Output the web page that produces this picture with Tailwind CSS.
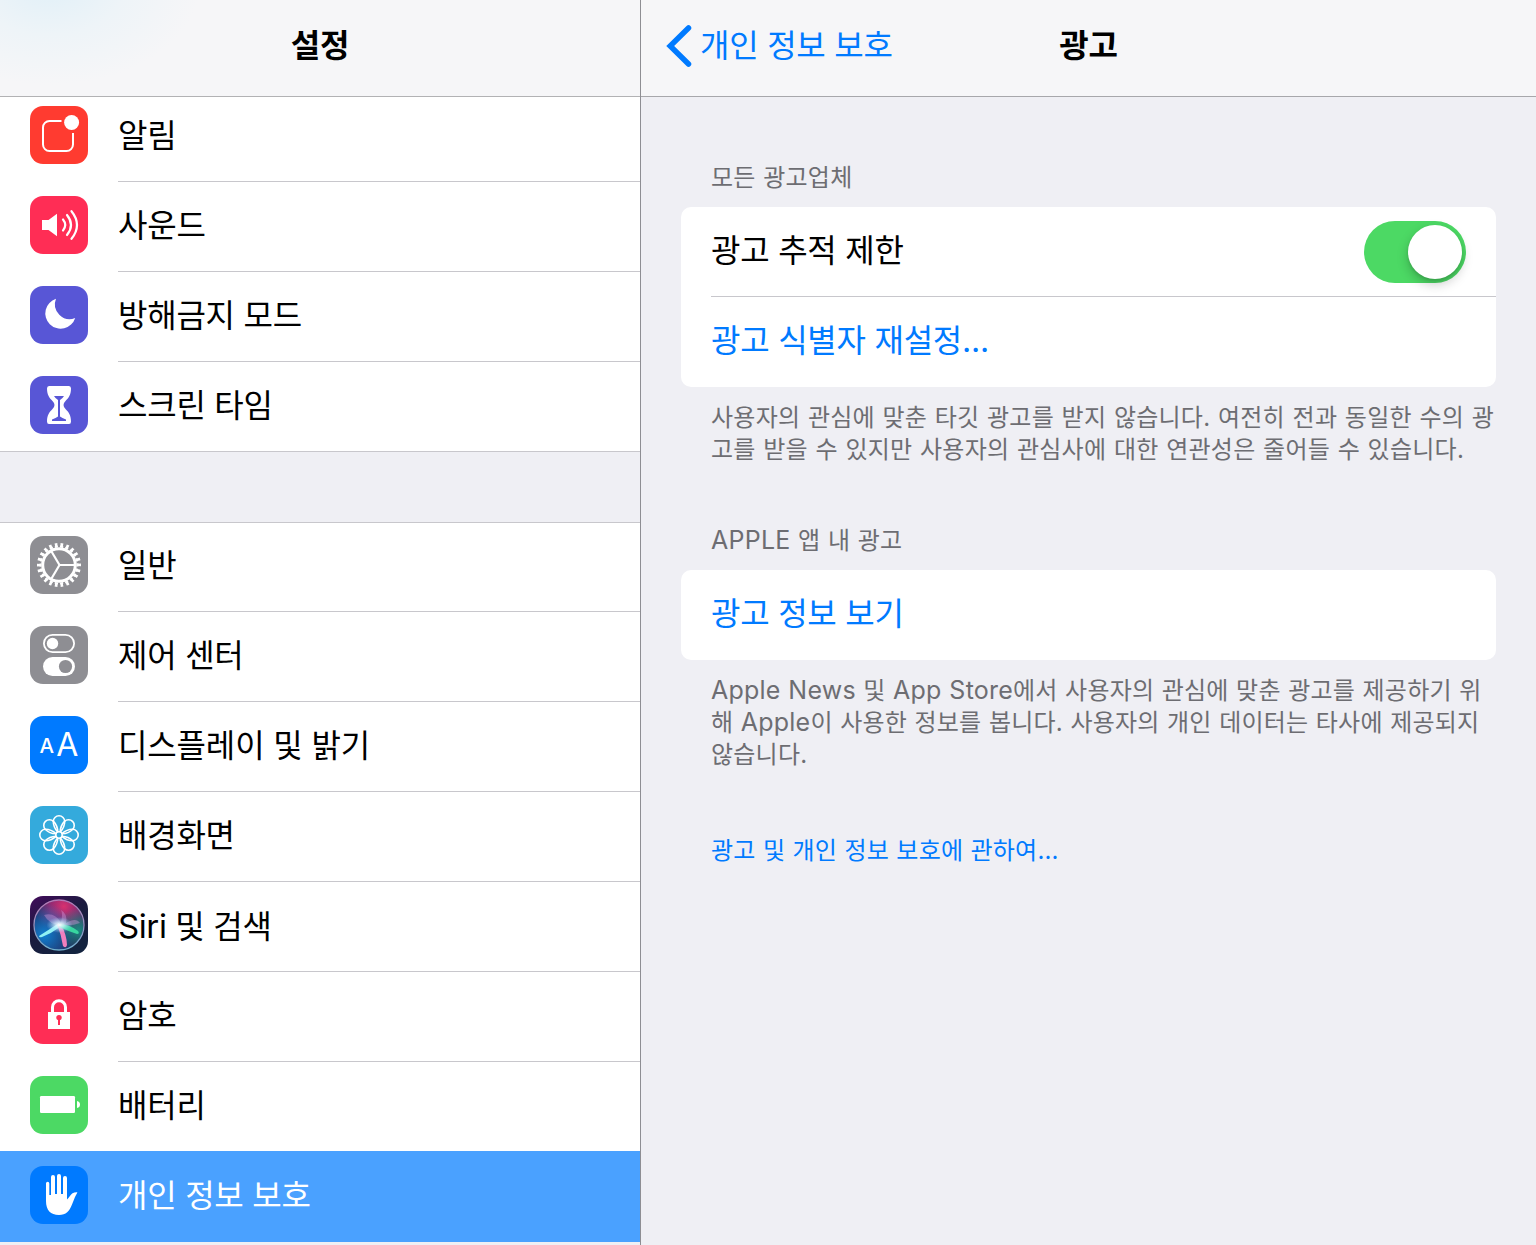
<!DOCTYPE html>
<html lang="ko">
<head>
<meta charset="utf-8">
<title>설정</title>
<script src="https://cdn.jsdelivr.net/npm/@tailwindcss/browser@4"></script>
</head>
<body class="w-[1536px] h-[1245px] overflow-hidden bg-[#efeff4] text-black text-[32px] leading-none tracking-[-0.25px] font-['Inter','Noto_Sans_CJK_KR',sans-serif]">
<div class="flex h-[1245px]">

  <!-- Sidebar -->
  <aside class="w-[641px] shrink-0 h-full border-r border-[#8e8e93] flex flex-col overflow-hidden">
    <header class="relative z-10 h-[97px] shrink-0 border-b border-[#b2b2b4] bg-[#f6f6f8] bg-[radial-gradient(ellipse_150px_100px_at_50px_-15px,#e1f0f8,#eef4f8_50%,transparent)] flex justify-center pt-[30px]">
      <h1 class="font-bold">설정</h1>
    </header>

    <ul class="bg-white -mt-[5px] border-b border-[#c8c7cc]">
      <li class="h-[90px] flex pl-[30px] gap-[30px]">
        <svg class="size-[58px] mt-[14px] shrink-0" viewBox="0 0 58 58"><rect width="58" height="58" rx="13" fill="#ff3b30"/><path d="M31.500 15H19.500a6.500 6.500 0 0 0-6.500 6.500V38.500a6.500 6.500 0 0 0 6.500 6.500H36.500a6.500 6.500 0 0 0 6.500-6.500V27" fill="none" stroke="#fff" stroke-width="2"/><circle cx="41.600" cy="16.500" r="7.500" fill="#fff"/></svg>
        <span class="flex-1 border-b border-[#c8c7cc] pt-[28px]">알림</span>
      </li>
      <li class="h-[90px] flex pl-[30px] gap-[30px]">
        <svg class="size-[58px] mt-[14px] shrink-0" viewBox="0 0 58 58"><rect width="58" height="58" rx="13" fill="#ff2d55"/><path d="M12 24h6.500L27 17.800V40.200L18.500 34H12z" fill="#fff"/><g fill="none" stroke="#fff" stroke-width="2.200" stroke-linecap="round"><path d="M33 23.500q4.500 5.500 0 11"/><path d="M37 19q8 10 0 20"/><path d="M41.500 15.200q11 13.800 0 27.600"/></g></svg>
        <span class="flex-1 border-b border-[#c8c7cc] pt-[28px]">사운드</span>
      </li>
      <li class="h-[90px] flex pl-[30px] gap-[30px]">
        <svg class="size-[58px] mt-[14px] shrink-0" viewBox="0 0 58 58"><rect width="58" height="58" rx="13" fill="#5856d6"/><path d="M26 12.800A15.300 15.300 0 1 0 45.200 32 14.800 14.800 0 0 1 26 12.800z" fill="#fff"/></svg>
        <span class="flex-1 border-b border-[#c8c7cc] pt-[28px]">방해금지 모드</span>
      </li>
      <li class="h-[89px] flex pl-[30px] gap-[30px]">
        <svg class="size-[58px] mt-[14px] shrink-0" viewBox="0 0 58 58"><rect width="58" height="58" rx="13" fill="#5856d6"/><path d="M19 10H39Q41 10 41 12.500C41 19 38.500 22 35.500 25Q31.500 29 35.500 33C38.500 36 41 39 41 45.500Q41 48 39 48H19Q17 48 17 45.500C17 39 19.500 36 22.500 33Q26.500 29 22.500 25C19.500 22 17 19 17 12.500Q17 10 19 10z" fill="#fff"/><path d="M24 20H34Q33 22 30 24V40.500Q32 42 36 43.500V45H22V43.500Q26 42 28 40.500V24Q25 22 24 20z" fill="#5856d6"/></svg>
        <span class="flex-1 pt-[28px]">스크린 타임</span>
      </li>
    </ul>

    <ul class="bg-white mt-[70px] border-t border-[#c8c7cc]">
      <li class="h-[89px] flex pl-[30px] gap-[30px]">
        <svg class="size-[58px] mt-[13px] shrink-0" viewBox="0 0 58 58"><rect width="58" height="58" rx="13" fill="#8e8e93"/><g fill="none" stroke="#fff"><circle cx="29" cy="29" r="18.500" stroke-width="2" pathLength="220" stroke-dasharray="6 4" transform="rotate(-4.900 29 29)"/><circle cx="29" cy="29" r="20" stroke-width="4" pathLength="220" stroke-dasharray="4.600 5.400" transform="rotate(-3.800 29 29)"/><circle cx="29" cy="29" r="16.300" stroke-width="3"/><path d="M29.500 29H45M29.500 29L21.500 15.500M29.500 29L21.500 42.500" stroke-width="2.200"/></g></svg>
        <span class="flex-1 border-b border-[#c8c7cc] pt-[27px]">일반</span>
      </li>
      <li class="h-[90px] flex pl-[30px] gap-[30px]">
        <svg class="size-[58px] mt-[14px] shrink-0" viewBox="0 0 58 58"><rect width="58" height="58" rx="13" fill="#8e8e93"/><rect x="13.900" y="8.900" width="30.200" height="17.200" rx="8.600" fill="none" stroke="#fff" stroke-width="1.800"/><circle cx="22.500" cy="17.500" r="5.700" fill="#fff"/><rect x="13" y="31" width="32" height="19" rx="9.500" fill="#fff"/><circle cx="35.500" cy="40.500" r="6.600" fill="#8e8e93"/></svg>
        <span class="flex-1 border-b border-[#c8c7cc] pt-[28px]">제어 센터</span>
      </li>
      <li class="h-[90px] flex pl-[30px] gap-[30px]">
        <svg class="size-[58px] mt-[14px] shrink-0" viewBox="0 0 58 58"><rect width="58" height="58" rx="13" fill="#007aff"/><g fill="#fff" letter-spacing="0"><text x="9.600" y="36.800" font-size="20.500" font-weight="500">A</text><text x="26.200" y="39.700" font-size="32">A</text></g></svg>
        <span class="flex-1 border-b border-[#c8c7cc] pt-[28px] tracking-[-0.15px]">디스플레이 및 밝기</span>
      </li>
      <li class="h-[90px] flex pl-[30px] gap-[30px]">
        <svg class="size-[58px] mt-[14px] shrink-0" viewBox="0 0 58 58"><rect width="58" height="58" rx="13" fill="#34aadc"/><defs><path id="petal" d="M-1.300-3C-4-6-5.700-9-5.700-13.500A5.700 5.700 0 0 1 5.700-13.500C5.700-9 4-6 1.300-3"/></defs><g transform="translate(29 29)" fill="none" stroke="#fff" stroke-width="1.600"><use href="#petal"/><use href="#petal" transform="rotate(45)"/><use href="#petal" transform="rotate(90)"/><use href="#petal" transform="rotate(135)"/><use href="#petal" transform="rotate(180)"/><use href="#petal" transform="rotate(225)"/><use href="#petal" transform="rotate(270)"/><use href="#petal" transform="rotate(315)"/><circle r="3.200"/></g></svg>
        <span class="flex-1 border-b border-[#c8c7cc] pt-[28px]">배경화면</span>
      </li>
      <li class="h-[90px] flex pl-[30px] gap-[30px]">
        <svg class="size-[58px] mt-[14px] shrink-0" viewBox="0 0 58 58">
          <defs>
            <linearGradient id="siriBg" x1="0" y1="0" x2=".6" y2="1"><stop offset="0" stop-color="#430b5c"/><stop offset=".5" stop-color="#1b1b3f"/><stop offset="1" stop-color="#13233f"/></linearGradient>
            <linearGradient id="siriRing" x1="0" y1="0" x2="0" y2="1"><stop offset="0" stop-color="#b779b5"/><stop offset="1" stop-color="#6fb1cf"/></linearGradient>
            <radialGradient id="siriPink" cx=".6" cy=".12" r=".6"><stop offset="0" stop-color="#d8316f"/><stop offset=".5" stop-color="#a02a77" stop-opacity=".85"/><stop offset="1" stop-color="#a02a77" stop-opacity="0"/></radialGradient>
            <radialGradient id="siriBlue" cx=".2" cy=".7" r=".65"><stop offset="0" stop-color="#0f7fd0"/><stop offset="1" stop-color="#0f7fd0" stop-opacity="0"/></radialGradient>
            <radialGradient id="siriGreen" cx=".9" cy=".6" r=".45"><stop offset="0" stop-color="#1b8a80"/><stop offset="1" stop-color="#1b8a80" stop-opacity="0"/></radialGradient>
            <radialGradient id="siriGlow"><stop offset="0" stop-color="#fff"/><stop offset=".35" stop-color="#d8f6ff" stop-opacity=".75"/><stop offset="1" stop-color="#8fd6ff" stop-opacity="0"/></radialGradient>
          </defs>
          <rect width="58" height="58" rx="13" fill="url(#siriBg)"/>
          <circle cx="29" cy="29" r="24.500" fill="#252457"/><circle cx="29" cy="29" r="24.500" fill="url(#siriPink)"/><circle cx="29" cy="29" r="24.500" fill="url(#siriBlue)"/><circle cx="29" cy="29" r="24.500" fill="url(#siriGreen)"/>
          <path d="M14 19Q25 16 31 27Q33 17 31 14Q38 18 36 27Q46 21 50 27Q42 30 33 29Q20 30 14 19z" fill="#d89adf" opacity=".4"/>
          <path d="M29 27Q20 33 9 40Q9 42 12 41Q22 37 30 31z" fill="#8ff1f4"/>
          <path d="M27 28Q31 38 33 50Q36 53 37 49Q37 40 31 28z" fill="#f07fbd"/>
          <path d="M29 28Q39 28 48 35Q50 38 47 38Q38 35 29 31z" fill="#38d6a0"/>
          <ellipse cx="29.500" cy="29" rx="13" ry="8" fill="url(#siriGlow)"/>
          <circle cx="29" cy="29" r="25" fill="none" stroke="url(#siriRing)" stroke-width="1.300"/>
        </svg>
        <span class="flex-1 border-b border-[#c8c7cc] pt-[28px]"><span class="text-[33px] leading-none tracking-[-0.4px]">Siri</span> 및 검색</span>
      </li>
      <li class="h-[90px] flex pl-[30px] gap-[30px]">
        <svg class="size-[58px] mt-[14px] shrink-0" viewBox="0 0 58 58"><rect width="58" height="58" rx="13" fill="#ff2d55"/><path d="M22.500 27V21.200a6.500 6.500 0 0 1 13 0V27" fill="none" stroke="#fff" stroke-width="3"/><path d="M18 26H40V43H18z" fill="#fff"/><circle cx="29" cy="31.600" r="2.700" fill="#ff2d55"/><path d="M28 32H30V39H28z" fill="#ff2d55"/></svg>
        <span class="flex-1 border-b border-[#c8c7cc] pt-[28px]">암호</span>
      </li>
      <li class="h-[89px] flex pl-[30px] gap-[30px]">
        <svg class="size-[58px] mt-[14px] shrink-0" viewBox="0 0 58 58"><rect width="58" height="58" rx="13" fill="#4cd964"/><rect x="10" y="20" width="35" height="17" rx="1.200" fill="#fff"/><path d="M47 25Q50 25.500 50 28.500T47 32z" fill="#fff"/></svg>
        <span class="flex-1 pt-[28px]">배터리</span>
      </li>
      <li class="h-[91px] flex pl-[30px] gap-[30px] bg-[#4aa1ff] text-white">
        <svg class="size-[58px] mt-[15px] shrink-0" viewBox="0 0 58 58"><rect width="58" height="58" rx="13" fill="#007aff"/><path d="M16 17.500a1.650 1.650 0 0 1 3.300 0V29H21V11a2 2 0 0 1 4 0V28H27V10a2 2 0 0 1 4 0V28H33V12a2 2 0 0 1 4 0V33.500C39.500 31 40.500 28.500 42.500 27.200Q44.500 26 47.300 26.200C47.500 27.300 46 28.500 45 31L42 38.500C39.500 45 36 49 29 49C20.500 49 16 44 16 35z" fill="#fff"/></svg>
        <span class="flex-1 pt-[29px]">개인 정보 보호</span>
      </li>
    </ul>
  </aside>

  <!-- Detail pane -->
  <main class="flex-1 min-w-0">
    <header class="h-[97px] border-b border-[#a7a7ab] bg-[#f6f6f8] grid grid-cols-[1fr_auto_1fr] pt-[30px]">
      <a class="flex pl-[25px] gap-[8px] text-[#007aff]">
        <svg class="w-[26px] h-[42px] -mt-[5px] shrink-0" viewBox="0 0 26 42"><path d="M22.500 3L4.200 21L22.500 39" fill="none" stroke="#007aff" stroke-width="5.500" stroke-linecap="round" stroke-linejoin="miter"/></svg>
        <span class="whitespace-nowrap">개인 정보 보호</span>
      </a>
      <h2 class="font-bold">광고</h2>
    </header>

    <div class="px-[40px]">
      <h3 class="pl-[30px] mt-[69px] text-[24px] leading-[24px] tracking-[0.25px] [word-spacing:0.5px] text-[#6d6d72]">모든 광고업체</h3>
      <section class="mt-[17px] bg-white rounded-[10px] h-[180px]">
        <div class="h-[90px] ml-[30px] border-b border-[#c8c7cc] flex justify-between pr-[30px]">
          <span class="pt-[28px]">광고 추적 제한</span>
          <div class="mt-[14px] w-[102px] h-[62px] rounded-full bg-[#4cd964] flex justify-end p-[4px]"><div class="size-[54px] rounded-full bg-white shadow-[0_5px_12px_rgba(0,0,0,0.22),0_2px_3px_rgba(0,0,0,0.1)]"></div></div>
        </div>
        <div class="h-[90px] ml-[30px] pt-[28px] text-[#007aff]">광고 식별자 재설정...</div>
      </section>
      <p class="pl-[30px] mt-[15px] text-[24px] leading-[32px] tracking-[0.25px] [word-spacing:0.6px] text-[#6d6d72] whitespace-nowrap">사용자의 관심에 맞춘 타깃 광고를 받지 않습니다. 여전히 전과 동일한 수의 광<br>고를 받을 수 있지만 사용자의 관심사에 대한 연관성은 줄어들 수 있습니다.</p>

      <h3 class="pl-[30px] mt-[62px] h-[24px] text-[24px] leading-[24px] tracking-[0.25px] [word-spacing:0.5px] text-[#6d6d72]"><span class="text-[25px] leading-none">APPLE</span> 앱 내 광고</h3>
      <section class="mt-[18px] bg-white rounded-[10px] h-[90px] pl-[30px] pt-[28px] text-[#007aff]">광고 정보 보기</section>
      <p class="pl-[30px] mt-[15px] text-[24px] leading-[32px] tracking-[0.22px] [word-spacing:0.5px] text-[#6d6d72] whitespace-nowrap"><span class="text-[25px] leading-none">Apple News</span> 및 <span class="text-[25px] leading-none">App Store</span>에서 사용자의 관심에 맞춘 광고를 제공하기 위<br>해 <span class="text-[25px] leading-none">Apple</span>이 사용한 정보를 봅니다. 사용자의 개인 데이터는 타사에 제공되지<br>않습니다.</p>
      <a class="block pl-[30px] mt-[68px] text-[24px] leading-[24px] tracking-[0.2px] [word-spacing:0.4px] text-[#007aff]">광고 및 개인 정보 보호에 관하여...</a>
    </div>
  </main>
</div>
</body>
</html>
